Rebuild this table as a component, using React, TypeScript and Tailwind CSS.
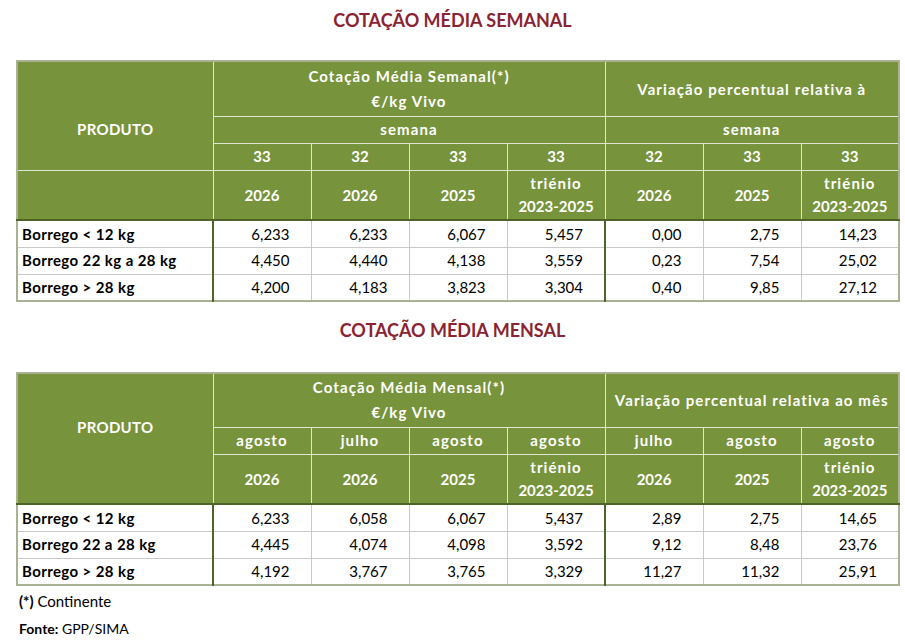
const FONT = "font-['Lato','Liberation_Sans',sans-serif]";

type Row = { name: string; vals: string[] };

const weekRows: Row[] = [
  { name: "Borrego < 12 kg", vals: ["6,233", "6,233", "6,067", "5,457", "0,00", "2,75", "14,23"] },
  { name: "Borrego 22 kg a 28 kg", vals: ["4,450", "4,440", "4,138", "3,559", "0,23", "7,54", "25,02"] },
  { name: "Borrego > 28 kg", vals: ["4,200", "4,183", "3,823", "3,304", "0,40", "9,85", "27,12"] },
];

const monthRows: Row[] = [
  { name: "Borrego < 12 kg", vals: ["6,233", "6,058", "6,067", "5,437", "2,89", "2,75", "14,65"] },
  { name: "Borrego 22 a 28 kg", vals: ["4,445", "4,074", "4,098", "3,592", "9,12", "8,48", "23,76"] },
  { name: "Borrego > 28 kg", vals: ["4,192", "3,767", "3,765", "3,329", "11,27", "11,32", "25,91"] },
];

const hd = "border border-[#dfe5d3] bg-[#77933c] p-0 text-center font-bold text-white";
// word headers are a bit wider in the original font
const wide = "tracking-[1.1px]";
const yearCells = ["2026", "2026", "2025", "tri", "2026", "2025", "tri"];

function YearCells() {
  return (
    <>
      {yearCells.map((y, i) =>
        y === "tri" ? (
          <th key={i} className={`${hd} leading-[23px]`}>
            <span className={wide}>triénio</span>
            <br />
            2023-2025
          </th>
        ) : (
          <th key={i} className={hd}>
            {y}
          </th>
        )
      )}
    </>
  );
}

function Body({ rows }: { rows: Row[] }) {
  return (
    <tbody>
      {rows.map((r) => (
        <tr key={r.name} className="h-[27px]">
          <td className="border border-[#c9c9c9] border-r-2 border-r-[#4f6228] pl-[4px] text-left font-bold tracking-[0.4px] text-black">
            {r.name}
          </td>
          {r.vals.map((v, i) => (
            <td
              key={i}
              className={`border border-[#c9c9c9] pr-[21px] text-right text-black ${
                i === 3 ? "border-r-2 border-r-[#4f6228]" : ""
              }`}
            >
              {v}
            </td>
          ))}
        </tr>
      ))}
    </tbody>
  );
}

function Cols() {
  return (
    <colgroup>
      <col className="w-[196px]" />
      {[0, 1, 2, 3, 4, 5, 6].map((i) => (
        <col key={i} className="w-[98px]" />
      ))}
    </colgroup>
  );
}

export default function App() {
  return (
    <div className={`w-[905px] h-[642px] bg-white px-[16px] text-[15px] text-black ${FONT}`}>
      <h1 className="h-[60px] pt-[8px] text-center text-[18px] font-bold leading-[24px] text-[#8a2432]">
        COTAÇÃO MÉDIA SEMANAL
      </h1>

      <table className="w-[882px] table-fixed border-collapse border-2 border-[#a9b293]">
        <Cols />
        <thead>
          <tr className="h-[55px]">
            <th rowSpan={3} className={`${hd} pt-[27px] tracking-[0.3px]`}>
              PRODUTO
            </th>
            <th colSpan={4} className={`${hd} ${wide} leading-[25px]`}>
              Cotação Média Semanal(*)
              <br />
              €/kg Vivo
            </th>
            <th colSpan={3} className={`${hd} ${wide}`}>
              Variação percentual relativa à
            </th>
          </tr>
          <tr className="h-[27px]">
            <th colSpan={4} className={`${hd} ${wide}`}>
              semana
            </th>
            <th colSpan={3} className={`${hd} ${wide}`}>
              semana
            </th>
          </tr>
          <tr className="h-[27px]">
            {["33", "32", "33", "33", "32", "33", "33"].map((w, i) => (
              <th key={i} className={hd}>
                {w}
              </th>
            ))}
          </tr>
          <tr className="h-[50px] border-b-2 border-b-[#4f6228]">
            <th className={`${hd} border-t-[#8fa75a]`} />
            <YearCells />
          </tr>
        </thead>
        <Body rows={weekRows} />
      </table>

      <h2 className="h-[70px] pt-[16px] text-center text-[18px] font-bold leading-[24px] text-[#8a2432]">
        COTAÇÃO MÉDIA MENSAL
      </h2>

      <table className="w-[882px] table-fixed border-collapse border-2 border-[#a9b293]">
        <Cols />
        <thead>
          <tr className="h-[54px]">
            <th rowSpan={3} className={`${hd} pb-[22px] tracking-[0.3px]`}>
              PRODUTO
            </th>
            <th colSpan={4} className={`${hd} ${wide} leading-[25px]`}>
              Cotação Média Mensal(*)
              <br />
              €/kg Vivo
            </th>
            <th colSpan={3} className={`${hd} ${wide}`}>
              Variação percentual relativa ao mês
            </th>
          </tr>
          <tr className="h-[27px]">
            {["agosto", "julho", "agosto", "agosto", "julho", "agosto", "agosto"].map((m, i) => (
              <th key={i} className={`${hd} ${wide}`}>
                {m}
              </th>
            ))}
          </tr>
          <tr className="h-[50px] border-b-2 border-b-[#4f6228]">
            <YearCells />
          </tr>
        </thead>
        <Body rows={monthRows} />
      </table>

      <div className="mt-[2px] h-[27px] pl-[3px] text-[15px] leading-[27px]">
        <span className="font-bold">(*)</span> Continente
      </div>
      <div className="h-[27px] pl-[3px] text-[14px] leading-[27px]">
        <span className="font-bold">Fonte:</span> GPP/SIMA
      </div>
    </div>
  );
}
